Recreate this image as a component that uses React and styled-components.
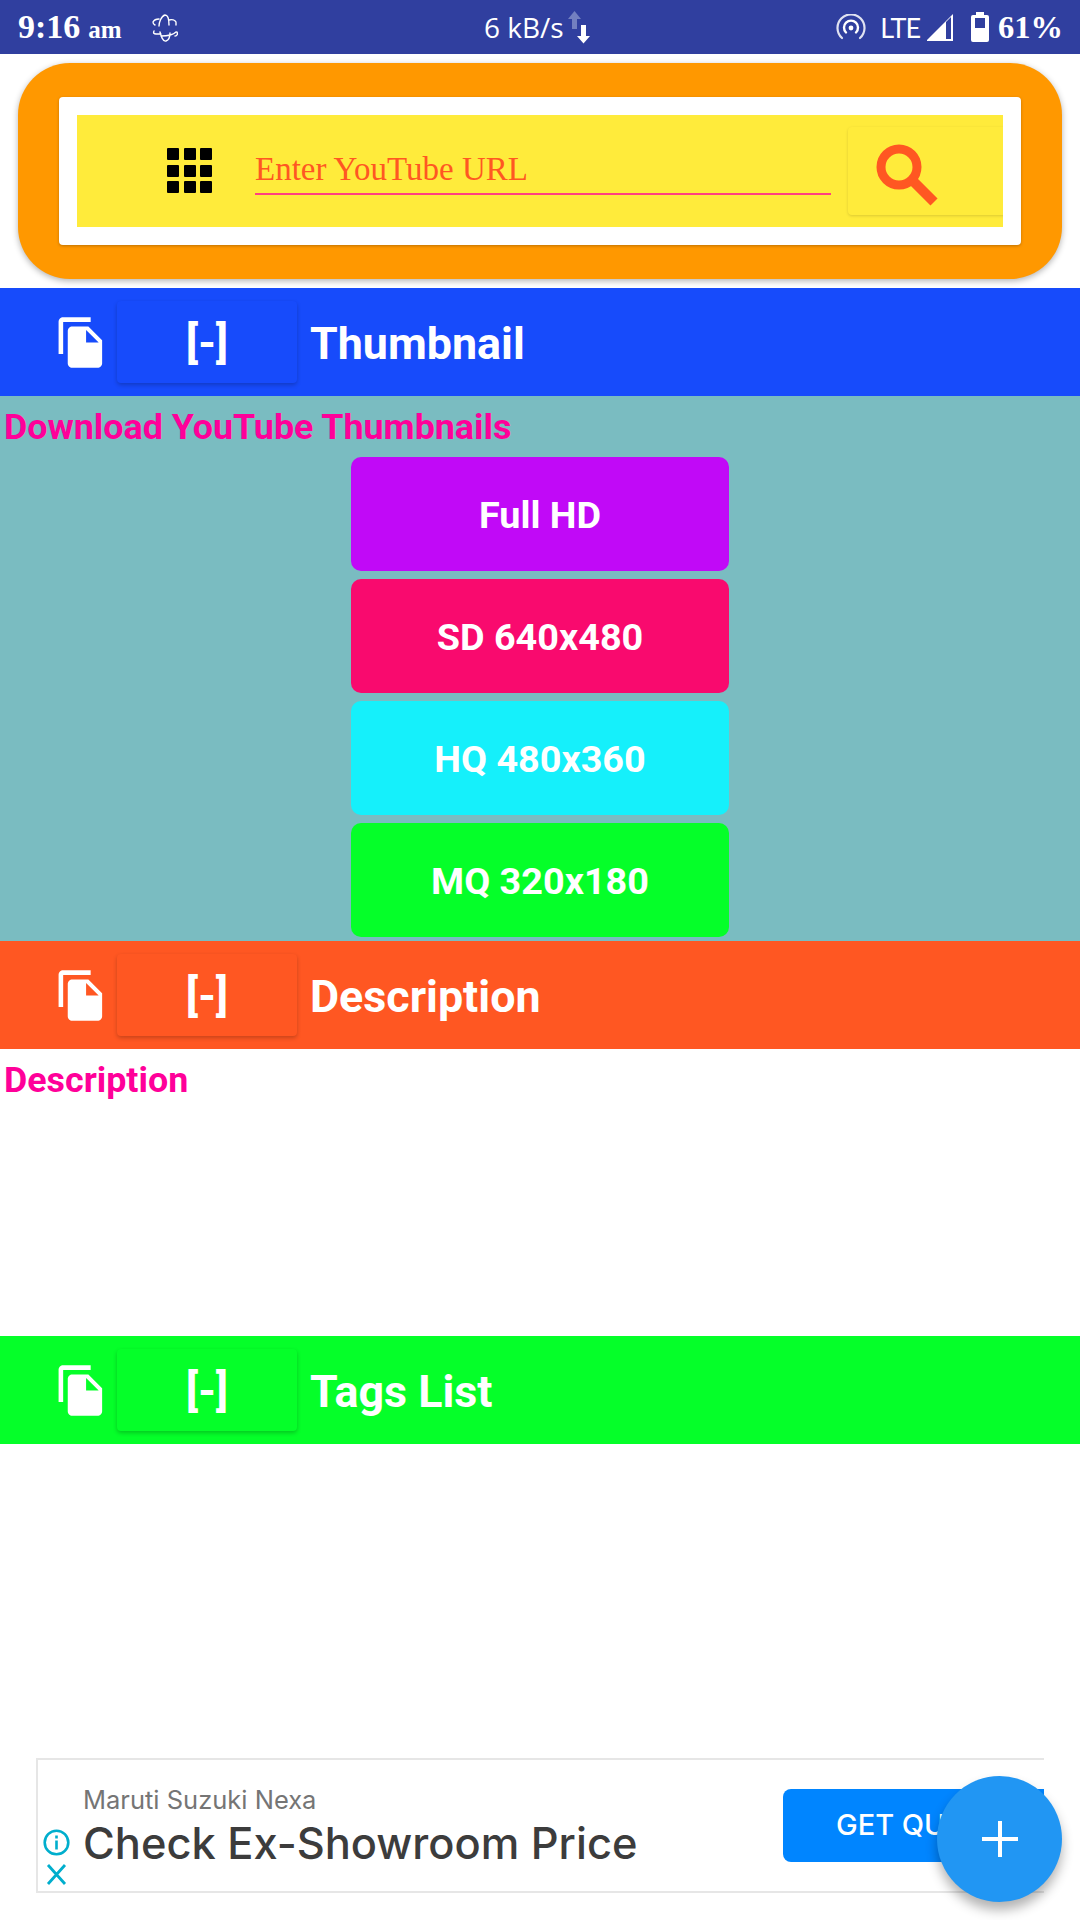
import React from 'react'
import styled, { createGlobalStyle } from 'styled-components'

const Global = createGlobalStyle`
  html, body { margin: 0; padding: 0; background: #fff; }
  * { box-sizing: border-box; }
`

const Page = styled.div`
  position: relative;
  width: 1080px;
  height: 1920px;
  overflow: hidden;
  background: #fff;
  font-family: Roboto, sans-serif;
`

const StatusBar = styled.div`
  height: 54px;
  background: #303f9f;
  color: #fff;
  display: flex;
  align-items: center;
  padding: 0 17px 0 18px;
`
const Clock = styled.div`
  font-family: "Liberation Serif", serif;
  font-weight: 700;
  font-size: 34px;
  width: 134px;
  small { font-size: 25px; margin-left: 8px; }
`
const Speed = styled.div`
  font-family: "Open Sans", sans-serif;
  font-size: 28px;
  margin-left: 306px;
  display: flex;
  align-items: center;
  gap: 4px;
`
const RightIcons = styled.div`
  margin-left: auto;
  display: flex;
  align-items: center;
`
const Lte = styled.span`
  font-family: "Lato", sans-serif;
  font-size: 27px;
  letter-spacing: -1px;
  margin: 0 7px 0 14px;
`
const Percent = styled.span`
  font-family: "Liberation Serif", serif;
  font-weight: 700;
  font-size: 32.500px;
  margin-left: 9px;
`

const SearchCard = styled.div`
  margin: 9px 18px;
  height: 216px;
  padding: 34px 41px;
  background: #ff9800;
  border-radius: 52px;
  box-shadow: 0 2px 6px rgba(0, 0, 0, 0.3);
`
const SearchInner = styled.div`
  height: 148px;
  padding: 18px;
  background: #fff;
  border-radius: 4px;
  box-shadow: 0 1px 3px rgba(0, 0, 0, 0.25);
`
const SearchBar = styled.div`
  height: 112px;
  background: #ffeb3b;
  display: flex;
  align-items: center;
  padding-left: 90px;
  overflow: hidden;
`
const GridIcon = styled.div`
  flex: none;
  display: grid;
  grid-template-columns: repeat(3, 12px);
  grid-auto-rows: 12px;
  gap: 4.500px;
  margin-right: 42px;
  margin-top: -1px;
  span { background: #000; border-radius: 1px; }
`
const UrlInput = styled.div`
  flex: none;
  width: 576px;
  height: 52px;
  margin: -4px 0 0 1px;
  padding-top: 8px;
  border-bottom: 2px solid #ff4081;
  font-family: "Liberation Serif", serif;
  font-size: 33px;
  line-height: 36px;
  color: #ff5722;
  white-space: nowrap;
`
const SearchButton = styled.div`
  flex: none;
  width: 180px;
  height: 88px;
  margin-left: 17px;
  padding: 13px 0 0 24px;
  background: #ffeb3b;
  border-radius: 4px;
  box-shadow: 0 1px 3px rgba(0, 0, 0, 0.14);
`

const SectionBar = styled.div`
  height: 108px;
  background: ${p => p.$color};
  color: #fff;
  display: flex;
  align-items: center;
  padding-left: 54px;
`
const Toggle = styled.div`
  width: 180px;
  height: 82px;
  margin-left: 8px;
  background: ${p => p.$color};
  border-radius: 4px;
  box-shadow: 0 2px 4px rgba(0, 0, 0, 0.22);
  display: flex;
  align-items: center;
  justify-content: center;
  font-size: 44.800px;
  font-weight: 700;
`
const SectionTitle = styled.div`
  margin-left: 13px;
  padding-top: 2px;
  font-size: 44.800px;
  font-weight: 700;
`
const SectionBody = styled.div`
  height: ${p => p.$height}px;
  background: ${p => p.$color || '#fff'};
`
const BodyTitle = styled.div`
  padding: 1px 0 0 4px;
  height: 61px;
  line-height: 61px;
  font-size: 35.800px;
  font-weight: 700;
  color: #ff0099;
`
const QualityList = styled.div`
  display: flex;
  flex-direction: column;
  align-items: center;
  gap: 8px;
`
const QualityButton = styled.div`
  width: 378px;
  height: 114px;
  padding-top: 2px;
  background: ${p => p.$color};
  border-radius: 10px;
  color: #fff;
  font-size: 37.800px;
  font-weight: 700;
  display: flex;
  align-items: center;
  justify-content: center;
`

const Ad = styled.div`
  margin: 314px 0 0 36px;
  width: 1008px;
  height: 135px;
  border: 2px solid #e6e6e6;
  border-right: none;
  display: flex;
  overflow: hidden;
`
const AdMarks = styled.div`
  flex: none;
  width: 36px;
  margin-right: 9px;
  display: flex;
  flex-direction: column;
  justify-content: flex-end;
  align-items: center;
  gap: 8px;
  padding-bottom: 6px;
`
const AdText = styled.div`
  flex: 1;
  padding-top: 23px;
`
const AdBrand = styled.div`
  font-family: Inter, sans-serif;
  font-size: 25.500px;
  line-height: 34px;
  color: #757575;
`
const AdHeadline = styled.div`
  font-family: Inter, sans-serif;
  font-weight: 500;
  font-size: 43.400px;
  line-height: 52px;
  color: #3c3c3c;
`
const AdButton = styled.div`
  align-self: center;
  flex: none;
  width: 261px;
  height: 73px;
  background: #0085ff;
  border-radius: 8px 0 0 8px;
  padding-left: 53px;
  line-height: 71px;
  font-family: Inter, sans-serif;
  font-weight: 500;
  font-size: 29px;
  color: #fff;
  white-space: nowrap;
`
const Fab = styled.div`
  position: absolute;
  left: 937px;
  top: 1776px;
  width: 125px;
  height: 126px;
  border-radius: 50%;
  background: #2196f3;
  box-shadow: 0 8px 12px rgba(0, 0, 0, 0.3);
  display: flex;
  align-items: center;
  justify-content: center;
`

const CopyIcon = () => (
  <svg width="55" height="55" viewBox="0 0 24 24" fill="#fff">
    <path d="M16 1H4c-1.1 0-2 .9-2 2v14h2V3h12V1zm-1 4l6 6v10c0 1.1-.9 2-2 2H7.99C6.89 23 6 22.1 6 21l.01-14c0-1.1.89-2 1.99-2h7zm-1 7h5.5L14 6.5V12z" />
  </svg>
)

const Section = ({ color, title }) => (
  <SectionBar $color={color}>
    <CopyIcon />
    <Toggle $color={color}>[-]</Toggle>
    <SectionTitle>{title}</SectionTitle>
  </SectionBar>
)

const qualities = [
  ['Full HD', '#c109f7'],
  ['SD 640x480', '#f90a6e'],
  ['HQ 480x360', '#15f0fb'],
  ['MQ 320x180', '#05ff29'],
]

export default function App() {
  return (
    <Page>
      <Global />
      <StatusBar>
        <Clock>9:16<small>am</small></Clock>
        <svg width="26" height="30" viewBox="0 0 26 30" fill="none" stroke="#fff" strokeWidth="1.400" strokeLinecap="round">
          <path d="M1 10c1-2 3-3 6-3M7 14c0-3 2-10 6-11 3 0 4 4 4 10M17 8c3-1 6 0 7 2M24 10v3M1 10c0 1 0 2 2 3" />
          <path d="M2 19c-1 2 0 3 2 3h5M8 20c1 4 3 10 6 9 3-1 4-5 4-8M9 24c4 0 12-1 15-4M25 20c1 2 0 4-2 4" />
        </svg>
        <Speed>
          6 kB/s
          <svg width="23" height="34" viewBox="0 0 23 34">
            <path d="M6.500 1L13 9H9v10H4V9H0z" fill="#7380c0" />
            <path d="M13 15h5v11h4l-6.500 7.500L9 26h4z" fill="#fff" />
          </svg>
        </Speed>
        <RightIcons>
          <svg width="30" height="26" viewBox="0 0 30 26" fill="none" stroke="#fff" strokeLinecap="round">
            <path d="M6 24A13.500 13.500 0 1 1 24 24" strokeWidth="2.200" opacity="0.85" />
            <path d="M10 18.500A7 7 0 1 1 20 18.500" strokeWidth="2.400" />
            <circle cx="15" cy="14" r="2.400" fill="#fff" stroke="none" />
          </svg>
          <Lte>LTE</Lte>
          <svg width="27" height="27" viewBox="0 0 27 27">
            <path d="M0 26L26 0v27H0z" fill="#fff" />
            <path d="M19 8l5-5v22h-5z" fill="#303f9f" />
          </svg>
          <svg width="18" height="30" viewBox="0 0 18 30" style={{ marginLeft: 17 }}>
            <path d="M5 0h8v3h3a2 2 0 0 1 2 2v23a2 2 0 0 1-2 2H2a2 2 0 0 1-2-2V5a2 2 0 0 1 2-2h3z" fill="#fff" />
            <path d="M4 6h10v10H4z" fill="#303f9f" />
          </svg>
          <Percent>61%</Percent>
        </RightIcons>
      </StatusBar>

      <SearchCard>
        <SearchInner>
          <SearchBar>
            <GridIcon>
              {Array.from({ length: 9 }, (_, i) => <span key={i} />)}
            </GridIcon>
            <UrlInput>Enter YouTube URL</UrlInput>
            <SearchButton>
              <svg width="66" height="66" viewBox="0 0 66 66" fill="none" stroke="#ff5722">
                <circle cx="27" cy="27" r="18" strokeWidth="9" />
                <path d="M40 40l22 22" strokeWidth="10" />
              </svg>
            </SearchButton>
          </SearchBar>
        </SearchInner>
      </SearchCard>

      <Section color="#174bfb" title="Thumbnail" />
      <SectionBody $color="#7abcc1" $height={545}>
        <BodyTitle>Download YouTube Thumbnails</BodyTitle>
        <QualityList>
          {qualities.map(([label, color]) => (
            <QualityButton key={label} $color={color}>{label}</QualityButton>
          ))}
        </QualityList>
      </SectionBody>

      <Section color="#ff5722" title="Description" />
      <SectionBody $height={287}>
        <BodyTitle>Description</BodyTitle>
      </SectionBody>

      <Section color="#05ff29" title="Tags List" />

      <Ad>
        <AdMarks>
          <svg width="27" height="27" viewBox="0 0 27 27" fill="none" stroke="#00aecd" strokeWidth="2.600">
            <circle cx="13.500" cy="13.500" r="11.800" />
            <path d="M13.500 11.500v9M13.500 6.500v3" />
          </svg>
          <svg width="21" height="21" viewBox="0 0 21 21" fill="none" stroke="#00aecd" strokeWidth="2.800">
            <path d="M2 1l17 19M19 1L2 20" />
          </svg>
        </AdMarks>
        <AdText>
          <AdBrand>Maruti Suzuki Nexa</AdBrand>
          <AdHeadline>Check Ex-Showroom Price</AdHeadline>
        </AdText>
        <AdButton>GET QUOTE</AdButton>
      </Ad>

      <Fab>
        <svg width="36" height="36" viewBox="0 0 36 36" stroke="#fff" strokeWidth="4">
          <path d="M18 0v36M0 18h36" />
        </svg>
      </Fab>
    </Page>
  )
}
